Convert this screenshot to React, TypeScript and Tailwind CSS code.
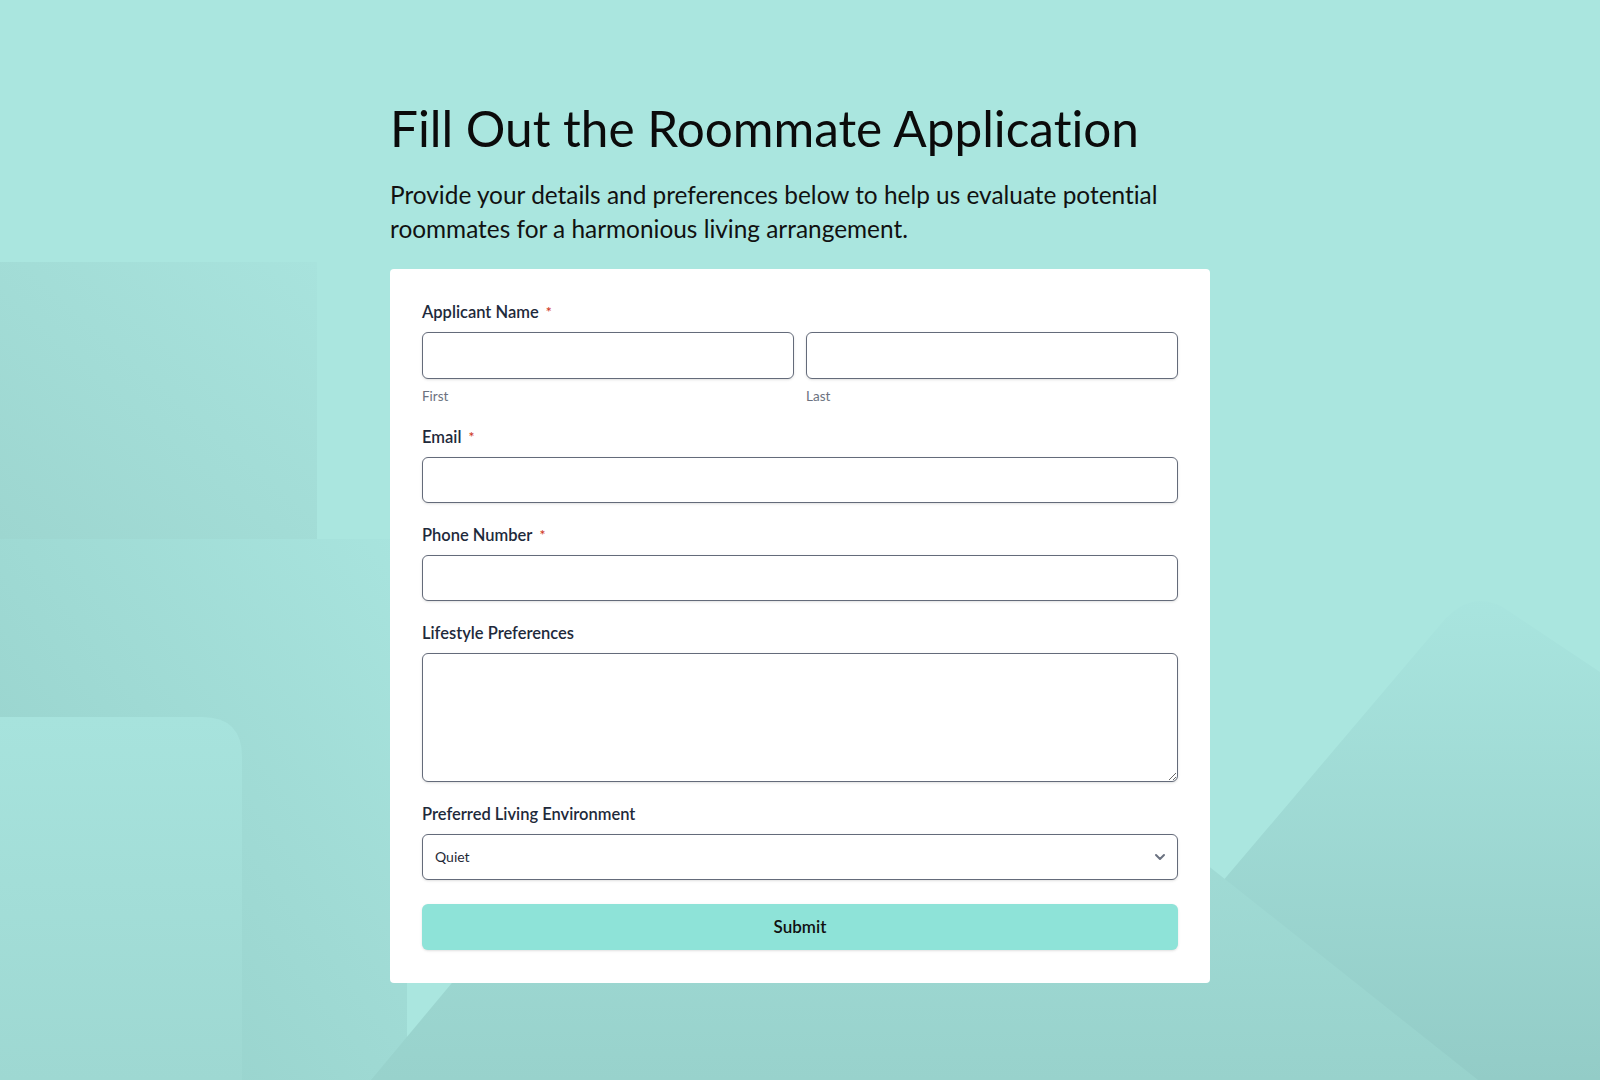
import { ChevronDown } from "lucide-react";

function Backdrop() {
  return (
    <svg
      className="absolute inset-0 h-full w-full"
      viewBox="0 0 1600 1080"
      preserveAspectRatio="none"
      aria-hidden="true"
    >
      <defs>
        <linearGradient id="rectA" x1="1" y1="0" x2="0" y2="1">
          <stop offset="0" stopColor="#a8e3dd" />
          <stop offset="1" stopColor="#9dd6d0" />
        </linearGradient>
        <linearGradient id="rectB" x1="1" y1="0" x2="0" y2="1">
          <stop offset="0" stopColor="#a8e4de" />
          <stop offset="1" stopColor="#95cfc9" />
        </linearGradient>
        <linearGradient id="rectC" x1="0" y1="0" x2="0" y2="1">
          <stop offset="0" stopColor="#a7e3dd" />
          <stop offset="1" stopColor="#9ed8d2" />
        </linearGradient>
        <linearGradient id="peakB" gradientUnits="userSpaceOnUse" x1="0" y1="590" x2="0" y2="1080">
          <stop offset="0" stopColor="#a9e5df" />
          <stop offset="1" stopColor="#93ccc7" />
        </linearGradient>
        <linearGradient id="peakA" gradientUnits="userSpaceOnUse" x1="0" y1="800" x2="0" y2="1080">
          <stop offset="0" stopColor="#a2ddd7" />
          <stop offset="1" stopColor="#98d2cc" />
        </linearGradient>
      </defs>
      <rect x="0" y="262" width="317" height="277" fill="url(#rectA)" />
      <rect x="0" y="539" width="407" height="541" fill="url(#rectB)" />
      <path d="M0 717 H202 Q242 717 242 757 V1080 H0 Z" fill="url(#rectC)" />
      <path d="M1054 1080 L1440 625 Q1473 585 1510 612 L1600 672 V1080 Z" fill="url(#peakB)" />
      <path d="M812 551 L1478 1080 L371 1080 Z" fill="url(#peakA)" />
    </svg>
  );
}

function Label({ text, required }: { text: string; required?: boolean }) {
  return (
    <label className="mb-2 flex items-center text-[16.5px] leading-6 font-semibold text-[#1e2a3b]">
      {text}
      {required && <span className="ml-[7px] text-sm leading-none text-[#cf3b28]">*</span>}
    </label>
  );
}

const inputCls =
  "block w-full rounded-md border border-[#646b7a] bg-white px-3 text-sm text-[#1f2937] shadow-sm outline-none";

export default function App() {
  return (
    <div className="relative min-h-screen overflow-hidden bg-[#aae6df] font-['Lato','Noto_Sans',sans-serif] [font-variant-ligatures:none]">
      <Backdrop />

      <main className="relative mx-auto w-[820px] pt-[104px] pb-24">
        <h1 className="text-[49.5px] leading-[48px] font-normal text-[#0b0b0b]">
          Fill Out the Roommate Application
        </h1>
        <p className="mt-[26px] text-[24.4px] leading-[33.6px] text-[#111]">
          Provide your details and preferences below to help us evaluate potential roommates for a
          harmonious living arrangement.
        </p>

        <form
          className="mt-[24px] rounded bg-white px-8 pt-[31px] pb-[33px]"
          onSubmit={(e) => e.preventDefault()}
        >
          {/* Applicant name */}
          <div className="mb-5">
            <Label text="Applicant Name" required />
            <div className="grid grid-cols-2 gap-3">
              <div>
                <input type="text" className={`${inputCls} h-[47px]`} />
                <span className="mt-2 block text-[13.5px] leading-[18px] text-[#6b7280]">First</span>
              </div>
              <div>
                <input type="text" className={`${inputCls} h-[47px]`} />
                <span className="mt-2 block text-[13.5px] leading-[18px] text-[#6b7280]">Last</span>
              </div>
            </div>
          </div>

          <div className="mb-5">
            <Label text="Email" required />
            <input type="email" className={`${inputCls} h-[46px]`} />
          </div>

          <div className="mb-5">
            <Label text="Phone Number" required />
            <input type="tel" className={`${inputCls} h-[46px]`} />
          </div>

          <div className="mb-5">
            <Label text="Lifestyle Preferences" />
            <textarea className="block h-[129px] w-full rounded-md border border-[#646b7a] bg-white px-3 py-2 text-sm shadow-sm outline-none" />
          </div>

          <div>
            <Label text="Preferred Living Environment" />
            <div className="relative">
              <select
                defaultValue="Quiet"
                className="block h-[46px] w-full appearance-none rounded-md border border-[#646b7a] bg-white px-3 text-sm text-[#1f2937] shadow-sm outline-none"
              >
                <option>Quiet</option>
                <option>Social</option>
                <option>Balanced</option>
              </select>
              <ChevronDown
                size={16}
                strokeWidth={3}
                className="pointer-events-none absolute top-1/2 right-[10px] -translate-y-1/2 text-[#6b7280]"
              />
            </div>
          </div>

          <button
            type="submit"
            className="mt-6 block h-[46px] w-full rounded-md bg-[#8ee3d8] text-[17px] font-semibold text-[#111] shadow-sm"
          >
            Submit
          </button>
        </form>
      </main>
    </div>
  );
}
